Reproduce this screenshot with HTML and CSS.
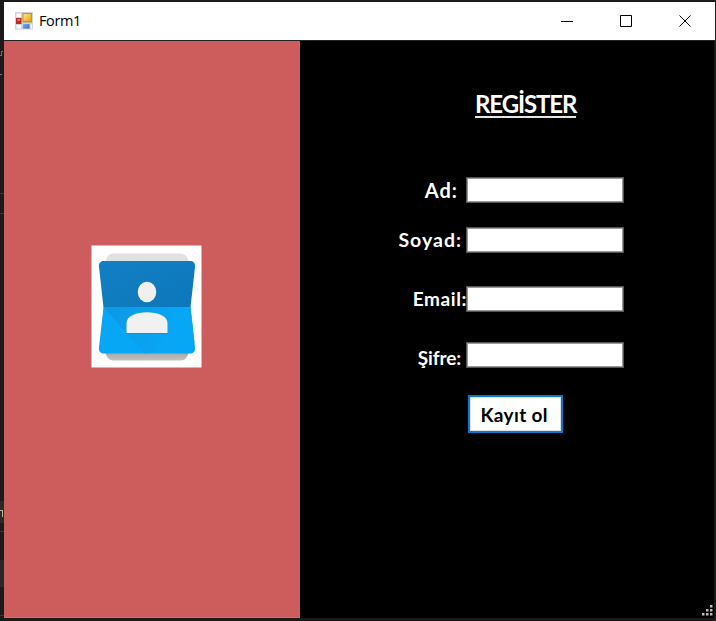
FILE: index.html
```html
<!DOCTYPE html>
<html lang="tr">
<head>
<meta charset="utf-8">
<title>Form1</title>
<link rel="stylesheet" href="styles.css">
</head>
<body>
<div class="desktop">
  <div class="backdrop">
    <svg width="4" height="621" viewBox="0 0 4 621" shape-rendering="crispEdges">
      <path d="M0 55h1v-4h2" fill="none" stroke="#77705f"/>
      <path d="M0 74.500h2" stroke="#4d88b8"/>
      <path d="M0 193.500h4M0 213.500h4" stroke="#393939"/>
      <path d="M0 501h4v22H0zM0 560h4v27H0z" fill="#292929"/>
      <path d="M0 531.5h4M0 615.5h4" stroke="#393939"/>
      <path d="M0 510.5h2.500v6" fill="none" stroke="#b9b69c"/>
    </svg>
  </div>
  <main class="window">
    <header class="titlebar">
      <svg class="app-icon" width="18" height="18" viewBox="0 0 18 18">
        <defs>
          <linearGradient id="yellow" x2="1" y2="1"><stop stop-color="#ffe98a"/><stop offset="1" stop-color="#dca414"/></linearGradient>
          <linearGradient id="blue" x2="1" y2="1"><stop stop-color="#78b4ff"/><stop offset="1" stop-color="#2f68ce"/></linearGradient>
        </defs>
        <path fill="#cfd2d6" d="M0 0h18v17.500H0z"/>
        <path fill="#fafafa" d="M1.500 1.500h4.500v3.500h-4.500zM1.500 13h4.500v3.500h-4.500zM15.500 12.500h1.500v4h-1.500z"/>
        <path fill="#b52c25" d="M1 6h5.500v6H1z"/><path fill="#e4776c" d="M2.500 7h2.500v2H2.500z"/>
        <path fill="#c4951b" d="M7.500 1h9.500v9.500H7.500z"/><path fill="url(#yellow)" d="M8.500 2h7.500v7H8.500z"/>
        <path fill="url(#blue)" d="M8 12h6.500v4.500H8z"/>
      </svg>
      <h1 class="caption">Form1</h1>
      <div class="controls">
        <svg width="13" height="13" viewBox="0 0 13 13"><path d="M0 6.500h12"/></svg>
        <svg width="13" height="13" viewBox="0 0 13 13"><path d="M.5.5h11v11H.5z"/></svg>
        <svg width="13" height="13" viewBox="0 0 13 13"><path d="M.5.5l11 11M11.500.5l-11 11"/></svg>
      </div>
    </header>
    <div class="content">
      <aside class="panel">
        <svg class="contact" width="111" height="123" viewBox="-.5 -.5 111 123">
          <defs>
            <linearGradient id="upper" x2="1" y2="1"><stop stop-color="#107fc3"/><stop offset=".5" stop-color="#107cc0"/><stop offset="1" stop-color="#0c76b9"/></linearGradient>
            <linearGradient id="fold" gradientUnits="userSpaceOnUse" x1="12" y1="62" x2="82" y2="88"><stop stop-color="#0d98e3"/><stop offset="1" stop-color="#08a7f5"/></linearGradient>
            <linearGradient id="base" x2="0" y2="1"><stop stop-color="#a0a0a0"/><stop offset="1" stop-color="#c2c2c2"/></linearGradient>
          </defs>
          <path fill="#fff" d="M0 0h110v122H0z"/>
          <path fill="#e1e1e1" d="M14 18c0-6 3-10 8-10h67c5 0 8 4 8 10z"/>
          <path fill="url(#base)" d="M14 105h83c0 6-3 10-8 10H22c-5 0-8-4-8-10z"/>
          <path fill="url(#upper)" d="M12 15.500h87c3 0 5 2.500 4.500 6L99 62H12L7.500 21.500c-.5-3.500 1.500-6 4.500-6z"/>
          <path fill="#08a7f5" d="M12 61.500h87l4.500 40.500c.5 3.500-1.500 6-4.500 6H12c-3 0-5-2.500-4.500-6z"/>
          <path fill="url(#fold)" d="M12 61.500h87l4 36-50 10.500z"/>
          <ellipse cx="55.500" cy="47" rx="9.500" ry="10.500" fill="#075f98" opacity=".35"/>
          <ellipse cx="55.500" cy="46.500" rx="9.300" ry="10.300" fill="#f0f0f0"/>
          <path fill="#087fbe" opacity=".35" d="M34.500 88.500V78c0-14 42-14 42 0v10.500z"/>
          <path fill="#f1f1f1" d="M35 87.500V77.500c0-14.500 41-14.500 41 0v10z"/>
        </svg>
      </aside>
      <form class="register">
        <h2 class="heading"><span>REGİSTER</span></h2>
        <div class="row ad"><label for="ad">Ad:</label><input id="ad" type="text"></div>
        <div class="row soyad"><label for="soyad">Soyad:</label><input id="soyad" type="text"></div>
        <div class="row email"><label for="email">Email:</label><input id="email" type="text"></div>
        <div class="row sifre"><label for="sifre">Şifre:</label><input id="sifre" type="password"></div>
        <button class="submit" type="button">Kayıt ol</button>
      </form>
      <svg class="grip" width="11" height="11" viewBox="0 0 11 11" fill="#bdbdb9">
        <path d="M8 0h2.500v2.500H8zM8 4h2.500v2.500H8zM4 4h2.500v2.500H4zM0 8h2.500v2.500H0zM4 8h2.500v2.500H4zM8 8h2.500v2.500H8z"/>
      </svg>
    </div>
  </main>
</div>
</body>
</html>
```
FILE: styles.css
```css
* { box-sizing: border-box; }
body { margin: 0; overflow: hidden; background: #1b1919; }
.desktop { display: flex; width: 716px; height: 621px; background: #1b1919; }
.backdrop { width: 4px; }
.backdrop svg { display: block; }
.window { width: 711px; height: 616px; margin-top: 2px; }
.titlebar {
  display: flex;
  align-items: center;
  height: 39px;
  padding: 0 23px 0 11px;
  background: #fff;
  border-bottom: 1px solid #242121;
}
.app-icon { margin-top: -1px; }
.caption {
  margin: 0 0 0 6px;
  font: 400 14.5px/20px "Open Sans", "Noto Sans", sans-serif;
  letter-spacing: -.4px;
  color: #000;
}
.controls { display: flex; gap: 46px; margin-left: auto; }
.controls svg { fill: none; stroke: #000; stroke-width: 1; }
.content { position: relative; display: flex; height: 577px; background: #000; margin-right: 1px; }
.panel {
  width: 296px;
  padding: 204px 0 0 87px;
  background: #cd5c5c;
  border-bottom: 1px solid #d97070;
}
.contact { display: block; }
.register {
  flex: 1;
  padding-top: 48px;
  color: #fff;
  font: 700 19px/26px Lato, sans-serif;
}
.heading { display: flex; margin: 0 0 0 175px; height: 30px; font-size: 24px; line-height: 30px; }
.heading span { height: 29px; border-bottom: 2px solid #e5e5e5; white-space: nowrap; letter-spacing: -1.1px; }
.row { display: flex; height: 26px; }
.row label { display: flex; justify-content: flex-end; width: 166px; white-space: nowrap; }
.row input {
  width: 158px;
  height: 26px;
  padding: 2px 4px;
  border: 1px solid #555;
  outline: 1px solid #999;
  outline-offset: -2px;
  border-radius: 0;
  background: #fff;
  font: inherit;
}
.ad { margin-top: 58px; }
.ad label { padding-right: 8px; font-size: 20px; letter-spacing: 1px; }
.soyad { margin-top: 24px; }
.soyad label { padding-right: 4px; font-size: 19.5px; letter-spacing: 1px; }
.email { margin-top: 33px; }
.email label { margin-right: -1px; margin-left: 1px; letter-spacing: .6px; }
.sifre { margin-top: 30px; }
.sifre label { padding: 3px 5px 0 0; letter-spacing: -.1px; }
.submit {
  display: block;
  width: 95px;
  height: 38px;
  margin: 27px 0 0 167.5px;
  padding: 1px 0 0 11px;
  border: 2px solid #0878d4;
  border-radius: 0;
  box-shadow: inset 0 0 0 1px #dedede;
  background: #fff;
  color: #000;
  text-align: left;
  font: inherit;
  letter-spacing: .35px;
}
.grip { position: absolute; right: 1px; bottom: 2px; }
```
